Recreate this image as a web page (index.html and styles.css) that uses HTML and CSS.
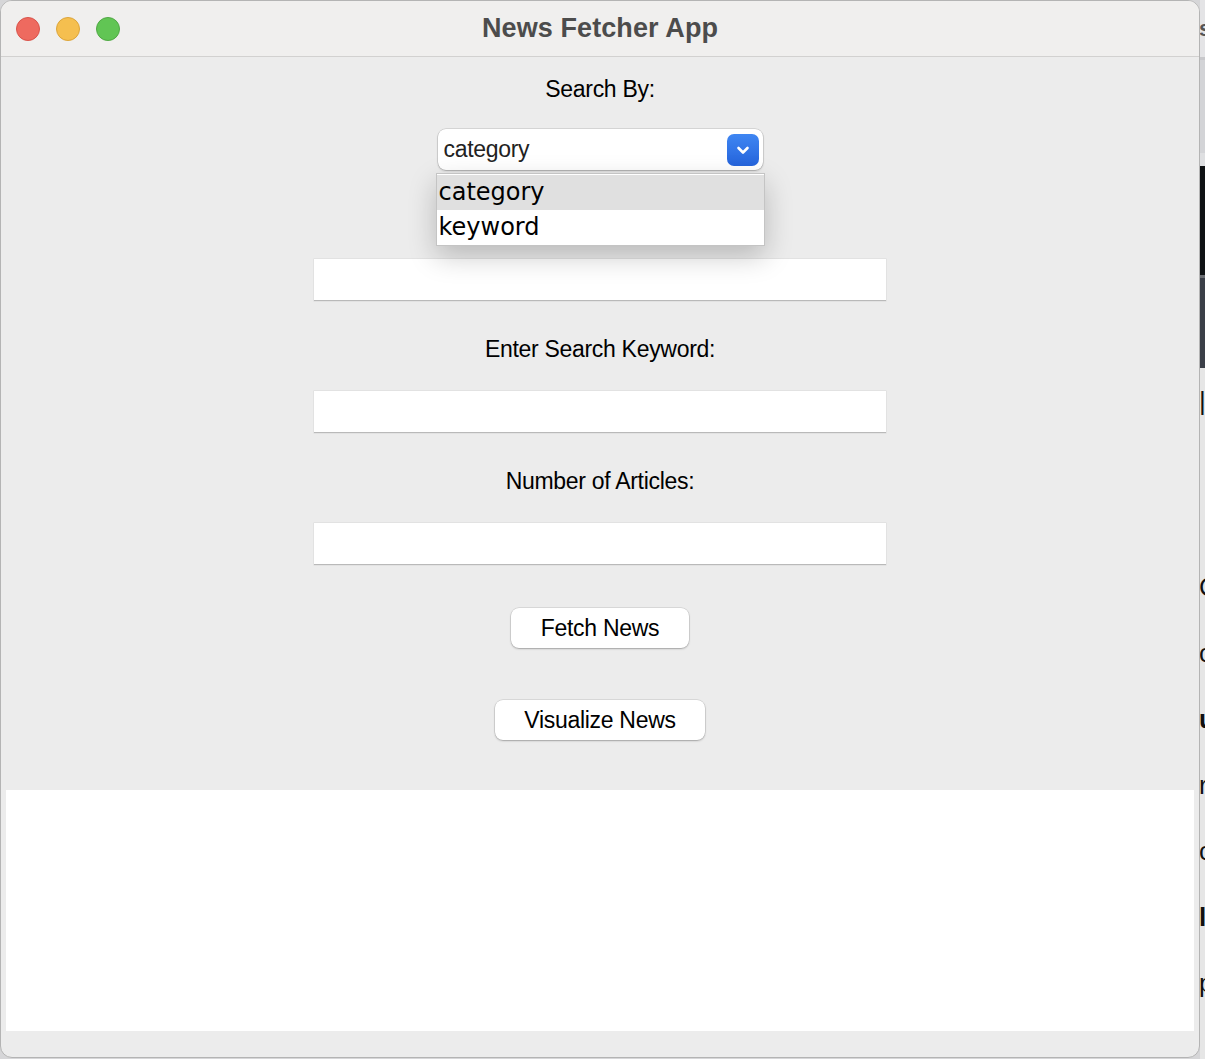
FILE: index.html
```html
<!DOCTYPE html>
<html lang="en">
<head>
<meta charset="utf-8">
<title>News Fetcher App</title>
<link rel="stylesheet" href="styles.css">
</head>
<body>
<div class="window">
  <div class="titlebar">
    <div class="lights">
      <span class="light red"></span>
      <span class="light yellow"></span>
      <span class="light green"></span>
    </div>
    <div class="title">News Fetcher App</div>
    <div></div>
  </div>
  <div class="content">
    <div class="label first">Search By:</div>
    <div class="select">
      <span class="select-text">category</span>
      <span class="select-btn">
        <svg width="32" height="32" viewBox="0 0 32 32"><polyline points="11.5,14 16,18.5 20.5,14" fill="none" stroke="#fff" stroke-width="2.6" stroke-linecap="round" stroke-linejoin="round"/></svg>
      </span>
      <div class="dropdown">
        <div class="option selected">category</div>
        <div class="option">keyword</div>
      </div>
    </div>
    <div class="label spacer"></div>
    <div class="entry"></div>
    <div class="label">Enter Search Keyword:</div>
    <div class="entry"></div>
    <div class="label">Number of Articles:</div>
    <div class="entry"></div>
    <button class="btn fetch">Fetch News</button>
    <button class="btn visualize">Visualize News</button>
    <div class="textarea"></div>
  </div>
</div>
<div class="desktop">
  <div class="d-top"><span class="glyph s">s</span></div>
  <div class="d-gray"></div>
  <div class="d-light"></div>
  <div class="d-dark"></div>
  <div class="d-line"></div>
  <div class="d-slate"></div>
  <div class="d-rest">
    <span class="glyph">|</span>
    <span class="glyph g1">C</span>
    <span class="glyph">c</span>
    <span class="glyph b">u</span>
    <span class="glyph">r</span>
    <span class="glyph">c</span>
    <span class="glyph b">l</span>
    <span class="glyph">p</span>
  </div>
</div>
</body>
</html>
```

FILE: styles.css
```css
html, body {
  margin: 0;
  padding: 0;
}
body {
  display: flex;
  width: 1205px;
  height: 1059px;
  overflow: hidden;
  background: #d6d6d8;
  font-family: "Liberation Sans", Arial, sans-serif;
}
.window {
  width: 1200px;
  height: 1058px;
  flex: none;
  box-sizing: border-box;
  border: 1px solid #b4b4b4;
  border-radius: 12px;
  overflow: hidden;
  background: #ececec;
  display: flex;
  flex-direction: column;
}
.titlebar {
  height: 55px;
  flex: none;
  background: #f0efee;
  border-bottom: 1px solid #d2d1d0;
  display: grid;
  grid-template-columns: 1fr auto 1fr;
  align-items: center;
}
.lights {
  display: flex;
  gap: 16px;
  padding-left: 15px;
}
.light {
  width: 24px;
  height: 24px;
  border-radius: 50%;
  box-sizing: border-box;
}
.red { background: #ee6a5f; border: 1px solid #d9534a; }
.yellow { background: #f5bf4f; border: 1px solid #dca53a; }
.green { background: #61c554; border: 1px solid #50a844; }
.title {
  font-weight: bold;
  font-size: 27px;
  color: #4c4c4c;
  letter-spacing: 0.1px;
}
.content {
  flex: 1;
  display: flex;
  flex-direction: column;
  align-items: center;
}
.label {
  height: 26px;
  line-height: 26px;
  font-size: 23px;
  color: #000;
  margin-top: 35px;
  letter-spacing: -0.3px;
}
.label.first {
  margin-top: 19px;
}
.label.spacer {
  width: 10px;
}
.select {
  position: relative;
  margin-top: 27px;
  width: 325px;
  height: 41px;
  box-sizing: border-box;
  background: #fff;
  border-radius: 8px;
  box-shadow: 0 0 0 0.5px rgba(0,0,0,0.18), 0 1px 2px rgba(0,0,0,0.22);
  display: flex;
  align-items: center;
}
.select-text {
  padding-left: 6px;
  font-size: 23px;
  color: #222;
  letter-spacing: -0.3px;
}
.select-btn {
  position: absolute;
  right: 4px;
  top: 5px;
  width: 32px;
  height: 32px;
  border-radius: 7px;
  background: linear-gradient(#3f86f2, #2564dc);
  display: flex;
}
.dropdown {
  position: absolute;
  top: 44px;
  left: -2px;
  width: 329px;
  box-sizing: border-box;
  border: 1px solid #c4c4c4;
  background: #fff;
  padding: 1px 0;
  box-shadow: 0 10px 28px rgba(0,0,0,0.22);
  z-index: 5;
}
.option {
  height: 34px;
  line-height: 34px;
  padding-left: 2px;
  font-family: "DejaVu Sans", sans-serif;
  font-size: 24px;
  color: #000;
}
.option.selected {
  height: 35px;
  background: #e0e0e0;
}
.entry {
  margin-top: 29px;
  width: 572px;
  height: 42px;
  box-sizing: border-box;
  background: #fff;
  border-bottom: 1px solid #b9b9b9;
  box-shadow: 0 0 0 0.5px #d8d8d8;
}
.spacer + .entry {
  margin-top: 28px;
}
.btn {
  margin-top: 43px;
  height: 40px;
  box-sizing: border-box;
  border: none;
  border-radius: 8px;
  background: #fff;
  box-shadow: 0 0 0 0.5px rgba(0,0,0,0.15), 0 1px 2px rgba(0,0,0,0.25);
  font-family: "Liberation Sans", Arial, sans-serif;
  font-size: 23px;
  color: #000;
  padding: 0;
  letter-spacing: -0.3px;
}
.fetch { width: 178px; }
.visualize { width: 210px; margin-top: 52px; }
.textarea {
  margin-top: 50px;
  width: 1188px;
  height: 241px;
  background: #fff;
}
.desktop {
  width: 5px;
  flex: none;
  display: flex;
  flex-direction: column;
  overflow: hidden;
  font-family: "Liberation Sans", Arial, sans-serif;
}
.d-top { height: 57px; background: #e4e4e6; position: relative; }
.d-gray { height: 93px; background: #d3d4d7; border-top: 3px solid #c8c8cb; }
.d-light { height: 13px; background: #dedfe1; }
.d-dark { height: 109px; background: #0f1214; }
.d-line { height: 3px; background: #6a6d72; }
.d-slate { height: 90px; background: #3b3f48; }
.d-rest {
  flex: 1;
  background: #e6e6e6;
  display: flex;
  flex-direction: column;
}
.glyph {
  display: block;
  font-size: 26px;
  color: #111;
  line-height: 66px;
  height: 66px;
  margin-left: -1px;
}
.glyph.g1 { margin-top: 120px; }
.glyph.b { font-weight: bold; }
.glyph.s {
  font-size: 22px;
  font-weight: bold;
  color: #555;
  line-height: 57px;
  height: 57px;
}
```
